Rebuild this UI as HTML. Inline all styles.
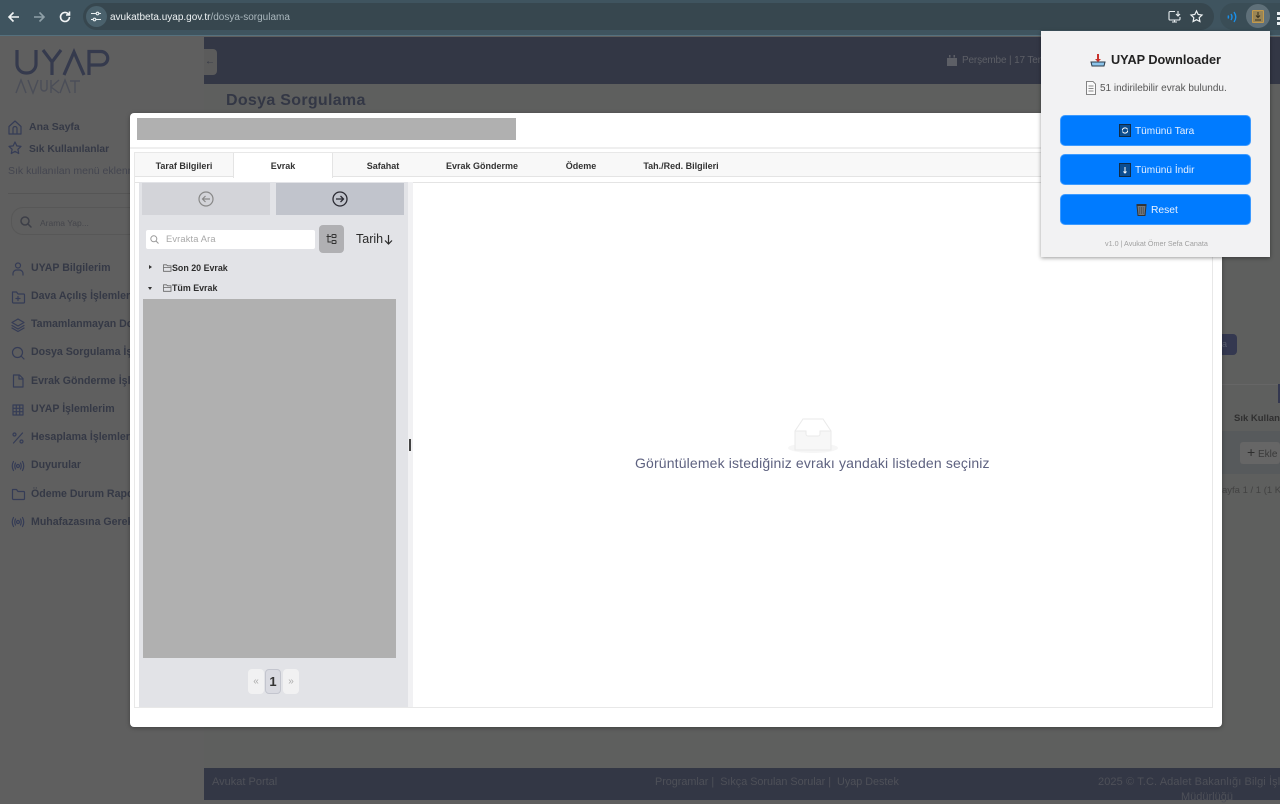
<!DOCTYPE html>
<html lang="tr"><head><meta charset="utf-8"><title>UYAP</title>
<style>
*{box-sizing:border-box}
html,body{margin:0;padding:0;width:1280px;height:800px;overflow:hidden;background:#5f5f5f;font-family:"Liberation Sans","DejaVu Sans",sans-serif}
.a{position:absolute;white-space:nowrap}
svg{display:block;overflow:visible}
.menu{color:#353946;font-size:10.600px;line-height:13px;font-weight:bold;left:31px}
.tab{top:154px;height:24px;line-height:24px;text-align:center;font-size:9px;font-weight:bold;color:#333}
.btn{left:1060px;width:191px;height:31px;background:#007bff;border-radius:5px;border:1px solid #3c9aff}
.ic{fill:none;stroke:#353c56;stroke-width:1.2;stroke-linecap:round;stroke-linejoin:round}
</style></head><body>

<!-- browser bar -->
<div class="a" style="left:0;top:0;width:1280px;height:36px;background:#3f545f;border-bottom:1px solid #55707d"></div>
<svg class="a" style="left:7px;top:10px" width="14" height="14" viewBox="0 0 14 14" fill="none" stroke="#f2f5f6" stroke-width="1.6"><path d="M12 7H2M6.500 2.500 2 7l4.500 4.500"/></svg>
<svg class="a" style="left:32px;top:10px" width="14" height="14" viewBox="0 0 14 14" fill="none" stroke="#8fa0a8" stroke-width="1.6"><path d="M2 7h10M7.500 2.500 12 7l-4.500 4.500"/></svg>
<svg class="a" style="left:58px;top:10px" width="14" height="14" viewBox="0 0 14 14" fill="none" stroke="#f2f5f6" stroke-width="1.6"><path d="M11.500 7a4.500 4.500 0 1 1-1.300-3.200L11.500 5M11.500 1.500V5H8"/></svg>
<div class="a" style="left:83px;top:3px;width:1131px;height:27px;border-radius:14px;background:#37474f"></div>
<div class="a" style="left:86px;top:6px;width:21px;height:21px;border-radius:50%;background:#4a616c"></div>
<svg class="a" style="left:90px;top:11px" width="12" height="11" viewBox="0 0 12 11" fill="none" stroke="#e8eef0" stroke-width="1.1"><path d="M1 2.500h5M9 2.500h2M1 8.500h2M6 8.500h5"/><circle cx="7.500" cy="2.500" r="1.300"/><circle cx="4.500" cy="8.500" r="1.300"/></svg>
<div class="a" style="left:110px;top:11px;font-size:10px;line-height:13px;color:#eef2f3">avukatbeta.uyap.gov.tr<span style="color:#aab7bd">/dosya-sorgulama</span></div>
<svg class="a" style="left:1168px;top:10px" width="13" height="13" viewBox="0 0 13 13" fill="none" stroke="#e8eef0" stroke-width="1.1"><path d="M7 1.500H2a1 1 0 0 0-1 1V9a1 1 0 0 0 1 1h9a1 1 0 0 0 1-1V7M4 12h5M6.500 10v2M10 1v4.500M8 4l2 2 2-2"/></svg>
<svg class="a" style="left:1190px;top:10px" width="13" height="13" viewBox="0 0 13 13" fill="none" stroke="#eef2f3" stroke-width="1.200"><path d="M6.500 1l1.700 3.500 3.800.5-2.800 2.700.7 3.800-3.400-1.800-3.400 1.800.7-3.800L1 5l3.800-.5z"/></svg>
<div class="a" style="left:1220px;top:3px;width:60px;height:27px;border-radius:14px 0 0 14px;background:#3a4d56"></div>
<svg class="a" style="left:1226px;top:10px" width="12" height="14" viewBox="0 0 12 14" fill="none" stroke="#1a8fe8" stroke-width="1.400"><path d="M2 5.500q1 1.500 0 3M5 4q2 3 0 6M8 2q3.500 5 0 10"/></svg>
<div class="a" style="left:1246px;top:4px;width:24px;height:24px;border-radius:50%;background:#5f7079"></div>
<div class="a" style="left:1252px;top:10px;width:12px;height:13px;background:#9a8555;border:1px solid #c59a4a;border-radius:1px"></div>
<svg class="a" style="left:1254px;top:12px" width="8" height="9" viewBox="0 0 8 9" fill="none" stroke="#3a3320" stroke-width="1.100"><path d="M4 0v5M2 3.500 4 5.500 6 3.500M1 8h6"/></svg>
<div class="a" style="left:1277px;top:12px;width:3px;height:3px;background:#e8eef0"></div>
<div class="a" style="left:1277px;top:17px;width:3px;height:3px;background:#e8eef0"></div>
<div class="a" style="left:1277px;top:22px;width:3px;height:3px;background:#e8eef0"></div>

<!-- page behind -->
<div class="a" style="left:0;top:37px;width:204px;height:763px;background:#5f5f5f"></div>
<div class="a" style="left:204px;top:37px;width:1076px;height:47px;background:#333745"></div>
<div class="a" style="left:204px;top:84px;width:1076px;height:684px;background:#5e5f5e"></div>
<div class="a" style="left:204px;top:768px;width:1076px;height:32px;background:#333745"></div>
<div class="a" style="left:204px;top:49px;width:13px;height:26px;background:#5b5b5b;border-radius:0 4px 4px 0;color:#333745;font-size:10px;line-height:26px;padding-left:1px">←</div>

<svg class="a" style="left:14px;top:48px" width="96" height="46" viewBox="0 0 96 46" fill="none" stroke="#353a4d" stroke-width="3.200"><path d="M3 2v14a9 9 0 0 0 9 9h1a9 9 0 0 0 9-9V2M29 2l9 12 9-12M38 14v13M50 27 60 4l10 23M75 27V3.500h12a6.500 6.500 0 0 1 0 13.500H76"/><path stroke="#4b4e58" stroke-width="1.400" d="M2 45 7 32l5 13M14 32l5 13 5-13M27 32v8a3 3 0 0 0 6 0v-8M37 32v13M45 32l-8 7 8 6M46 45l5-13 5 13M56 33h10M61 33v12"/></svg>

<svg class="a ic" style="left:8px;top:120px" width="14" height="15" viewBox="0 0 14 15"><path d="M1 6.500 7 1l6 5.500V14H1zM5 14V8.500a2 2 0 0 1 4 0V14"/></svg>
<div class="a" style="left:29px;top:121px;font-size:10.500px;line-height:13px;font-weight:bold;color:#353946">Ana Sayfa</div>
<svg class="a ic" style="left:8px;top:141px" width="14" height="14" viewBox="0 0 14 14"><path d="M7 1l1.800 3.900 4.200.5-3.100 2.900.8 4.200L7 10.400 3.300 12.500l.8-4.200L1 5.400l4.200-.5z"/></svg>
<div class="a" style="left:29px;top:143px;font-size:10.300px;line-height:13px;font-weight:bold;color:#353946">Sık Kullanılanlar</div>
<div class="a" style="left:8px;top:165px;font-size:10.500px;line-height:13px;color:#444650;width:122px;overflow:hidden">Sık kullanılan menü eklenm</div>
<div class="a" style="left:8px;top:193px;width:122px;height:1px;background:#555"></div>
<div class="a" style="left:11px;top:207px;width:130px;height:28px;border:1px solid #575757;border-radius:12px"></div>
<svg class="a ic" style="left:20px;top:216px;stroke:#3d3f48;stroke-width:1.500" width="12" height="12" viewBox="0 0 12 12"><circle cx="5" cy="5" r="4"/><path d="M8 8l3 3"/></svg>
<div class="a" style="left:40px;top:218px;font-size:8.500px;line-height:10px;color:#45464c">Arama Yap...</div>

<svg class="a ic" style="left:11px;top:262px" width="14" height="14" viewBox="0 0 14 14"><circle cx="7" cy="3.500" r="2.500"/><path d="M2 13v-1.500A3.500 3.500 0 0 1 5.500 8h3a3.500 3.500 0 0 1 3.500 3.500V13"/></svg>
<svg class="a ic" style="left:11px;top:290px" width="14" height="14" viewBox="0 0 14 14"><path d="M1.500 2h4l1.500 2h5.500a1 1 0 0 1 1 1v7a1 1 0 0 1-1 1h-10a1 1 0 0 1-1-1zM7 6.500v4M5 8.500h4"/></svg>
<svg class="a ic" style="left:11px;top:318px" width="14" height="14" viewBox="0 0 14 14"><path d="M7 1 13 4.500 7 8 1 4.500zM1 7.500 7 11l6-3.500M1 10l6 3.500L13 10"/></svg>
<svg class="a ic" style="left:11px;top:346px" width="14" height="14" viewBox="0 0 14 14"><circle cx="6.500" cy="6.500" r="5"/><path d="M10 10l3 3"/></svg>
<svg class="a ic" style="left:11px;top:374px" width="14" height="14" viewBox="0 0 14 14"><path d="M2.500 1h6l3.500 3.500V13h-9.500zM8 1v4h4"/></svg>
<svg class="a ic" style="left:11px;top:403px" width="14" height="14" viewBox="0 0 14 14"><path d="M2 2h10v10H2zM2 5.300h10M2 8.700h10M5.300 2v10M8.700 2v10"/></svg>
<svg class="a ic" style="left:11px;top:431px" width="14" height="14" viewBox="0 0 14 14"><path d="M11.500 2 2.500 12"/><circle cx="3.500" cy="3.500" r="1.500"/><circle cx="10.500" cy="10.500" r="1.500"/></svg>
<svg class="a ic" style="left:11px;top:459px" width="14" height="14" viewBox="0 0 14 14"><circle cx="7" cy="7" r="1.500"/><path d="M4.500 4q-1.500 3 0 6M9.500 4q1.500 3 0 6M2.500 2.500q-2.500 4.500 0 9M11.500 2.500q2.500 4.500 0 9"/></svg>
<svg class="a ic" style="left:11px;top:487px" width="14" height="14" viewBox="0 0 14 14"><path d="M1.500 2.500h4l1.500 2h5.500a1 1 0 0 1 1 1v6a1 1 0 0 1-1 1h-10a1 1 0 0 1-1-1z"/></svg>
<svg class="a ic" style="left:11px;top:515px" width="14" height="14" viewBox="0 0 14 14"><circle cx="7" cy="7" r="1.500"/><path d="M4.500 4q-1.500 3 0 6M9.500 4q1.500 3 0 6M2.500 2.500q-2.500 4.500 0 9M11.500 2.500q2.500 4.500 0 9"/></svg>
<div class="a menu" style="top:262px">UYAP Bilgilerim</div>
<div class="a menu" style="top:290px">Dava Açılış İşlemleri</div>
<div class="a menu" style="top:318px">Tamamlanmayan Dosya</div>
<div class="a menu" style="top:346px">Dosya Sorgulama İşlem</div>
<div class="a menu" style="top:375px">Evrak Gönderme İşlem</div>
<div class="a menu" style="top:403px">UYAP İşlemlerim</div>
<div class="a menu" style="top:431px">Hesaplama İşlemleri</div>
<div class="a menu" style="top:459px">Duyurular</div>
<div class="a menu" style="top:488px">Ödeme Durum Rapor</div>
<div class="a menu" style="top:516px">Muhafazasına Gerek</div>

<svg class="a" style="left:947px;top:55px" width="10" height="11" viewBox="0 0 10 11" fill="#5d5f66"><path d="M0 3h10v8H0zM2 0h1.500v2.500H2zM6.500 0H8v2.500H6.500z"/></svg>
<div class="a" style="left:962px;top:54px;font-size:10px;line-height:13px;color:#5d5f66;letter-spacing:-.15px">Perşembe | 17 Temmuz</div>
<div class="a" style="left:226px;top:92px;font-size:16px;line-height:18px;font-weight:bold;color:#333745;letter-spacing:.3px">Dosya Sorgulama</div>
<div class="a" style="left:1222px;top:334px;width:15px;height:21px;background:#343850;border-radius:0 4px 4px 0;color:#5b6070;font-size:9px;line-height:21px">a</div>
<div class="a" style="left:1222px;top:384px;width:58px;height:1px;background:#666"></div>
<div class="a" style="left:1278px;top:384px;width:2px;height:19px;background:#343850"></div>
<div class="a" style="left:1222px;top:431px;width:58px;height:43px;background:#575a5c"></div>
<div class="a" style="left:1234px;top:413px;font-size:9.500px;line-height:12px;font-weight:bold;color:#303030">Sık Kullanılan</div>
<div class="a" style="left:1240px;top:442px;width:40px;height:22px;background:#666;border-radius:3px;color:#3a3a3a;font-size:10px;line-height:22px;padding-left:7px"><b style="font-weight:normal;font-size:14px;line-height:20px;color:#2e2e2e">+</b> Ekle</div>
<div class="a" style="left:1222px;top:485px;font-size:9.500px;line-height:12px;color:#424242">ayfa 1 / 1 (1 Kayıt)</div>

<div class="a" style="left:212px;top:775px;font-size:11px;line-height:14px;color:#4e5058">Avukat Portal</div>
<div class="a" style="left:655px;top:775px;font-size:10.800px;line-height:14px;color:#4e5058">Programlar | &nbsp;Sıkça Sorulan Sorular | &nbsp;Uyap Destek</div>
<div class="a" style="left:1098px;top:775px;font-size:11px;line-height:14px;color:#4e5058;letter-spacing:.1px">2025 © T.C. Adalet Bakanlığı Bilgi İşlem</div>
<div class="a" style="left:1181px;top:790px;font-size:11px;line-height:14px;color:#4e5058">Müdürlüğü</div>

<!-- modal -->
<div class="a" style="left:130px;top:113px;width:1092px;height:614px;background:#fff;border-radius:4px;box-shadow:0 1px 4px rgba(0,0,0,.35)"></div>
<div class="a" style="left:137px;top:118px;width:379px;height:22px;background:#b0b0b0"></div>
<div class="a" style="left:130px;top:147px;width:1092px;height:2px;background:#efefef"></div>
<div class="a" style="left:134px;top:152px;width:1079px;height:556px;border:1px solid #e8e8e8"></div>
<div class="a" style="left:135px;top:153px;width:1077px;height:24px;background:#f8f8f8;border-bottom:1px solid #e4e4e4"></div>
<div class="a" style="left:233px;top:153px;width:100px;height:25px;background:#fff;border-left:1px solid #e4e4e4;border-right:1px solid #e4e4e4"></div>
<div class="a" style="left:135px;top:178px;width:1077px;height:5px;background:#fff;border-bottom:1px solid #e4e4e4"></div>
<div class="a tab" style="left:135px;width:98px">Taraf Bilgileri</div>
<div class="a tab" style="left:233px;width:100px">Evrak</div>
<div class="a tab" style="left:333px;width:100px">Safahat</div>
<div class="a tab" style="left:433px;width:98px">Evrak Gönderme</div>
<div class="a tab" style="left:531px;width:100px">Ödeme</div>
<div class="a tab" style="left:631px;width:100px">Tah./Red. Bilgileri</div>

<!-- left panel -->
<div class="a" style="left:139px;top:182px;width:269px;height:525px;background:#e2e3e7"></div>
<div class="a" style="left:408px;top:182px;width:5px;height:525px;background:#f1f1f3"></div>
<div class="a" style="left:142px;top:183px;width:128px;height:32px;background:#d3d4d9"></div>
<div class="a" style="left:276px;top:183px;width:128px;height:32px;background:#c1c4cc"></div>
<svg class="a" style="left:198px;top:191px" width="16" height="16" viewBox="0 0 16 16" fill="none" stroke="#888" stroke-width="1.200"><circle cx="8" cy="8" r="7"/><path d="M12 8H4.500M7.500 5 4.500 8l3 3"/></svg>
<svg class="a" style="left:332px;top:191px" width="16" height="16" viewBox="0 0 16 16" fill="none" stroke="#2b2b33" stroke-width="1.300"><circle cx="8" cy="8" r="7"/><path d="M4 8h7.500M8.500 5l3 3-3 3"/></svg>
<div class="a" style="left:146px;top:230px;width:169px;height:19px;background:#fff;border-radius:2px"></div>
<svg class="a" style="left:150px;top:235px" width="9" height="9" viewBox="0 0 9 9" fill="none" stroke="#999" stroke-width="1"><circle cx="3.800" cy="3.800" r="3"/><path d="M6 6l2.500 2.500"/></svg>
<div class="a" style="left:166px;top:233px;font-size:9.300px;line-height:12px;color:#a8a8a8;letter-spacing:.15px">Evrakta Ara</div>
<div class="a" style="left:319px;top:225px;width:25px;height:28px;background:#b0b0b3;border-radius:4px"></div>
<svg class="a" style="left:326px;top:233px" width="11" height="12" viewBox="0 0 11 12" fill="none" stroke="#333" stroke-width="1"><path d="M2 1v8h3M0.500 3.500H5"/><rect x="6" y="1.500" width="4" height="3" rx=".8"/><rect x="6" y="7.500" width="4" height="3" rx=".8"/></svg>
<div class="a" style="left:356px;top:232px;font-size:12.500px;line-height:14px;color:#2b2b2b">Tarih</div>
<svg class="a" style="left:384px;top:235px" width="9" height="10" viewBox="0 0 9 10" fill="none" stroke="#2b2b2b" stroke-width="1.200"><path d="M4.500 0v9M1 5.500 4.500 9 8 5.500"/></svg>
<div class="a" style="left:149px;top:265px;border-left:3px solid #333;border-top:2px solid transparent;border-bottom:2px solid transparent"></div>
<div class="a" style="left:148px;top:287px;border-top:3px solid #333;border-left:2.500px solid transparent;border-right:2.500px solid transparent"></div>
<svg class="a" style="left:163px;top:264px" width="9" height="8" viewBox="0 0 9 8" fill="none" stroke="#666" stroke-width=".8"><path d="M.5.800h3l1 1h3.500v5.500H.5zM.5 3.500h8"/></svg>
<svg class="a" style="left:163px;top:284px" width="9" height="8" viewBox="0 0 9 8" fill="none" stroke="#666" stroke-width=".8"><path d="M.5.800h3l1 1h3.500v5.500H.5zM.5 3.500h8"/></svg>
<div class="a" style="left:172px;top:262px;font-size:8.900px;line-height:12px;font-weight:bold;color:#2d2d2d">Son 20 Evrak</div>
<div class="a" style="left:172px;top:282px;font-size:8.900px;line-height:12px;font-weight:bold;color:#2d2d2d">Tüm Evrak</div>
<div class="a" style="left:143px;top:299px;width:253px;height:359px;background:#b0b0b0"></div>
<div class="a" style="left:248px;top:669px;width:16px;height:25px;background:#f1f1f2;border-radius:4px;text-align:center;font-size:10px;line-height:25px;color:#aaa">«</div>
<div class="a" style="left:265px;top:669px;width:16px;height:25px;background:#d9dae1;border:1px solid #c3c5ce;border-radius:4px;text-align:center;font-size:13px;font-weight:bold;line-height:23px;color:#333">1</div>
<div class="a" style="left:283px;top:669px;width:16px;height:25px;background:#f1f1f2;border-radius:4px;text-align:center;font-size:10px;line-height:25px;color:#aaa">»</div>
<div class="a" style="left:409px;top:439px;width:2px;height:12px;background:#444"></div>

<!-- empty state -->
<div class="a" style="left:788px;top:443px;width:50px;height:10px;border-radius:50%;background:#f6f6f6"></div>
<svg class="a" style="left:794px;top:417px" width="38" height="34" viewBox="0 0 38 34"><path d="M1 14 9 2h20l8 12v19H1z" fill="#fff" stroke="#eaeaea"/><path d="M1 14h11v3a2 2 0 0 0 2 2h10a2 2 0 0 0 2-2v-3h11v19H1z" fill="#f7f7f7" stroke="#eaeaea"/></svg>
<div class="a" style="left:635px;top:455px;font-size:14px;line-height:17px;color:#5e6280;letter-spacing:.15px">Görüntülemek istediğiniz evrakı yandaki listeden seçiniz</div>

<!-- popup -->
<div class="a" style="left:1041px;top:31px;width:229px;height:226px;background:#f2f2f3;box-shadow:0 1px 4px rgba(0,0,0,.4)"></div>
<svg class="a" style="left:1090px;top:53px" width="16" height="14" viewBox="0 0 16 14"><path d="M1 9h14l-1 4H2z" fill="#8cc4ea" stroke="#2b3b4a"/><path d="M8 1v6" stroke="#c8322c" stroke-width="2"/><path d="M5 6h6L8 9z" fill="#c8322c"/></svg>
<div class="a" style="left:1111px;top:52px;font-size:12.700px;line-height:17px;font-weight:bold;color:#222">UYAP Downloader</div>
<svg class="a" style="left:1086px;top:81px" width="10" height="14" viewBox="0 0 10 14" fill="#fafafa" stroke="#666"><path d="M.5.500h6.500l2.500 2.500v10.500H.5zM2.500 5h5M2.500 7.500h5M2.500 10h5" stroke-width=".8"/></svg>
<div class="a" style="left:1100px;top:82px;font-size:10px;line-height:14px;color:#555">51 indirilebilir evrak bulundu.</div>

<div class="a btn" style="top:115px"></div>
<svg class="a" style="left:1119px;top:124px" width="12" height="13" viewBox="0 0 12 13"><rect x=".5" y=".5" width="11" height="12" fill="#0b4d90" stroke="#102a44"/><path d="M3.500 6.500a2.500 2 0 0 1 5-1M8.500 6.500a2.500 2 0 0 1-5 1" fill="none" stroke="#fff"/></svg>
<div class="a" style="left:1135px;top:125px;font-size:10.100px;line-height:14px;color:#e8f1ff">Tümünü Tara</div>

<div class="a btn" style="top:154px"></div>
<svg class="a" style="left:1119px;top:163px" width="12" height="14" viewBox="0 0 12 14"><rect x=".5" y=".5" width="11" height="13" fill="#0b4d90" stroke="#102a44"/><path d="M6 4v6M4.500 8.500 6 10l1.500-1.500" fill="none" stroke="#fff"/></svg>
<div class="a" style="left:1135px;top:164px;font-size:10.100px;line-height:14px;color:#e8f1ff">Tümünü İndir</div>

<div class="a btn" style="top:194px"></div>
<svg class="a" style="left:1136px;top:203px" width="11" height="13" viewBox="0 0 11 13"><path d="M1 2.500h9L9 12.500H2z" fill="#70777d" stroke="#333"/><path d="M.5 1.800h10" stroke="#333" stroke-width="1.500"/><path d="M3.800 4v7M5.500 4v7M7.200 4v7" stroke="#444" stroke-width=".6"/></svg>
<div class="a" style="left:1151px;top:204px;font-size:10.300px;line-height:14px;color:#e8f1ff">Reset</div>

<div class="a" style="left:1105px;top:239px;font-size:7.200px;line-height:10px;color:#a0a0a0">v1.0 | Avukat Ömer Sefa Canata</div>
</body></html>
